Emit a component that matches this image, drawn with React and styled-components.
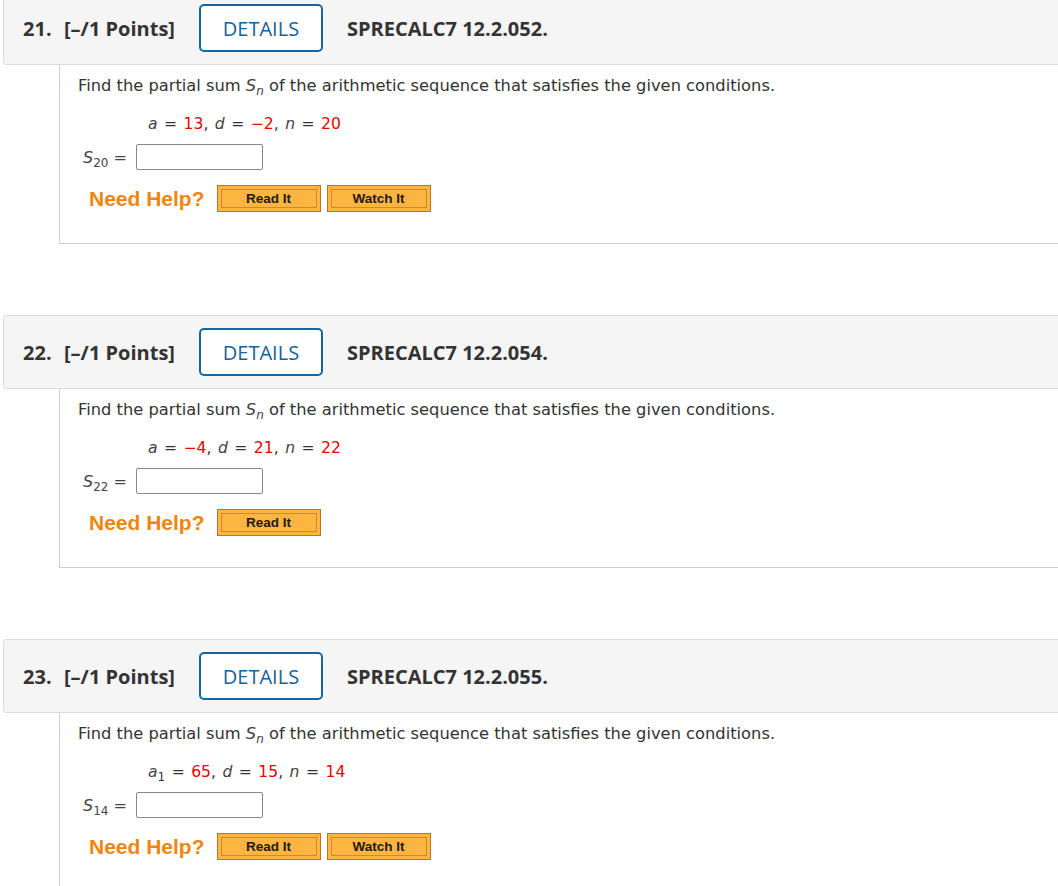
import React from "react";
import styled, { createGlobalStyle } from "styled-components";

const Global = createGlobalStyle`
  html, body { margin: 0; padding: 0; background: #fff; }
  body { overflow: hidden; }
`;

const Page = styled.div`
  padding-left: 3px;
  margin-top: -9px;
  width: 1100px;
`;

const Question = styled.section`
  margin-bottom: 71px;
`;

const Header = styled.div`
  display: flex;
  align-items: center;
  height: 72px;
  background: #f5f5f5;
  border: 1px solid #dcdcdc;
  border-radius: 3px;
  padding-left: 19px;
  font-family: "Open Sans", sans-serif;
  color: #333;
  font-size: 20px;
`;

const Num = styled.span`
  font-weight: 700;
  width: 41px;
`;

const Points = styled.span`
  font-weight: 700;
  margin-right: 24px;
`;

const DetailsBtn = styled.button`
  height: 48px;
  width: 124px;
  border: 2px solid #1466a0;
  border-radius: 5px;
  background: #fff;
  color: #15629b;
  font-family: "Open Sans", sans-serif;
  font-size: 20px;
  margin-right: 24px;
  padding: 0;
`;

const Code = styled.span`
  font-weight: 700;
`;

const Body = styled.div`
  margin-left: 56px;
  height: 179px;
  box-sizing: border-box;
  border-left: 1px solid #cfcfcf;
  border-bottom: 1px solid #cfcfcf;
  padding-left: 18px;
  padding-top: 10px;
  font-family: "DejaVu Sans", Verdana, sans-serif;
  color: #333;
  font-size: 16.3px;
`;

const Prompt = styled.div`
  line-height: 22px;
`;

const Var = styled.i`
  font-style: oblique;
  color: #444;
`;

const Sub = styled.sub`
  font-size: 12px;
  vertical-align: -4px;
  line-height: 0;
`;

const Eq = styled.div`
  margin-top: 16px;
  margin-left: 70px;
  line-height: 22px;
  font-size: 15.6px;
  word-spacing: 1.5px;
`;

const Red = styled.span`
  color: #ee0000;
`;

const AnswerRow = styled.div`
  display: flex;
  align-items: center;
  margin-top: 9px;
  margin-left: 5px;
  height: 26px;
`;

const Label = styled.span`
  width: 53px;
  color: #444;
  font-size: 16px;
`;

const Input = styled.div`
  width: 125px;
  height: 24px;
  border: 1px solid #8a8a8a;
  border-radius: 2px;
  background: #fff;
`;

const HelpRow = styled.div`
  display: flex;
  align-items: center;
  margin-top: 15px;
  margin-left: 11px;
  height: 27px;
`;

const NeedHelp = styled.span`
  font-family: "Liberation Sans", Arial, sans-serif;
  font-weight: 700;
  font-size: 21px;
  color: #f0850f;
  margin-right: 12px;
`;

const HelpBtn = styled.button`
  width: 104px;
  height: 27px;
  margin-right: 6px;
  background: #fcb540;
  border: 1px solid #c07420;
  box-shadow: inset 0 0 0 3px #fcb540, inset 0 0 0 4px #c98a35;
  font-family: "Liberation Sans", Arial, sans-serif;
  font-weight: 700;
  font-size: 13.5px;
  color: #1e1a14;
  padding: 0;
`;

const data = [
  {
    num: 21,
    code: "SPRECALC7 12.2.052.",
    eq: [["a", null], "13", ["d", null], "\u22122", ["n", null], "20"],
    s: "20",
    watch: true,
  },
  {
    num: 22,
    code: "SPRECALC7 12.2.054.",
    eq: [["a", null], "\u22124", ["d", null], "21", ["n", null], "22"],
    s: "22",
    watch: false,
  },
  {
    num: 23,
    code: "SPRECALC7 12.2.055.",
    eq: [["a", "1"], "65", ["d", null], "15", ["n", null], "14"],
    s: "14",
    watch: true,
  },
];

function Equation({ eq }) {
  const parts = [];
  for (let i = 0; i < eq.length; i += 2) {
    const [v, sub] = eq[i];
    parts.push(
      <React.Fragment key={i}>
        <Var>{v}</Var>
        {sub && <Sub>{sub}</Sub>}
        {" = "}
        <Red>{eq[i + 1]}</Red>
        {i + 2 < eq.length ? ", " : ""}
      </React.Fragment>
    );
  }
  return <Eq>{parts}</Eq>;
}

export default function App() {
  return (
    <>
      <Global />
      <Page>
        {data.map((q) => (
          <Question key={q.num}>
            <Header>
              <Num>{q.num}.</Num>
              <Points>[–/1 Points]</Points>
              <DetailsBtn>DETAILS</DetailsBtn>
              <Code>{q.code}</Code>
            </Header>
            <Body>
              <Prompt>
                Find the partial sum <Var>S</Var>
                <Sub>
                  <Var>n</Var>
                </Sub>{" "}
                of the arithmetic sequence that satisfies the given conditions.
              </Prompt>
              <Equation eq={q.eq} />
              <AnswerRow>
                <Label>
                  <Var>S</Var>
                  <Sub>{q.s}</Sub> =
                </Label>
                <Input />
              </AnswerRow>
              <HelpRow>
                <NeedHelp>Need Help?</NeedHelp>
                <HelpBtn>Read It</HelpBtn>
                {q.watch && <HelpBtn>Watch It</HelpBtn>}
              </HelpRow>
            </Body>
          </Question>
        ))}
      </Page>
    </>
  );
}
